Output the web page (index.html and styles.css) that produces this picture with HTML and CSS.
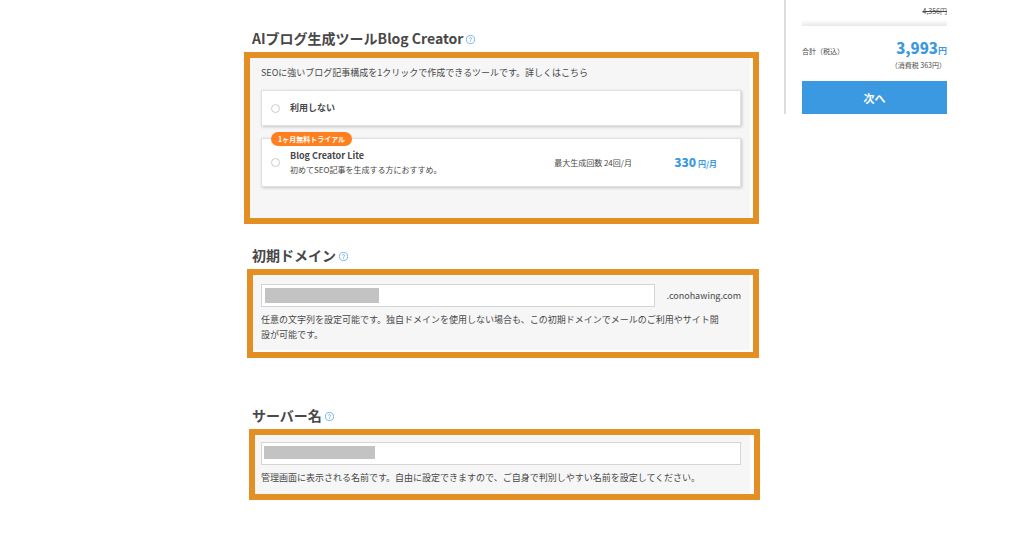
FILE: index.html
```
<!DOCTYPE html>
<html lang="ja">
<head>
    <meta charset="UTF-8">
    <meta name="viewport" content="width=device-width, initial-scale=1.0">
    <title>お申し込み</title>
    <link rel="stylesheet" href="styles.css">
</head>
<body>
    <div class="page">
        <main>
            <section class="creator">
                <h2>AIブログ生成ツールBlog Creator
                    <svg class="help" viewBox="0 0 20 20"><circle cx="10" cy="10" r="9"/><path d="M7.5 8a2.5 2.5 0 1 1 3.8 2.1c-.9.5-1.3.9-1.3 2M10 13.8v1.6"/></svg>
                </h2>
                <div class="frame">
                    <div class="panel">
                        <p class="lead">SEOに強いブログ記事構成を1クリックで作成できるツールです。詳しくはこちら</p>
                        <label class="plan">
                            <input type="radio" name="plan">
                            <span class="plan-name">利用しない</span>
                        </label>
                        <label class="plan lite">
                            <span class="badge">1ヶ月無料トライアル</span>
                            <input type="radio" name="plan">
                            <span class="plan-text">
                                <span class="plan-name">Blog Creator Lite</span>
                                <span class="plan-note">初めてSEO記事を生成する方におすすめ。</span>
                            </span>
                            <span class="plan-limit">最大生成回数 24回/月</span>
                            <span class="plan-price"><b>330</b> 円/月</span>
                        </label>
                    </div>
                </div>
            </section>

            <section class="domain">
                <h2><label for="domain">初期ドメイン</label>
                    <svg class="help" viewBox="0 0 20 20"><circle cx="10" cy="10" r="9"/><path d="M7.5 8a2.5 2.5 0 1 1 3.8 2.1c-.9.5-1.3.9-1.3 2M10 13.8v1.6"/></svg>
                </h2>
                <div class="frame">
                    <div class="panel">
                        <div class="field">
                            <input type="text" id="domain">
                            <span class="mask"></span>
                            <span class="suffix">.conohawing.com</span>
                        </div>
                        <p>任意の文字列を設定可能です。独自ドメインを使用しない場合も、この初期ドメインでメールのご利用やサイト開<br>設が可能です。</p>
                    </div>
                </div>
            </section>

            <section class="server">
                <h2><label for="server">サーバー名</label>
                    <svg class="help" viewBox="0 0 20 20"><circle cx="10" cy="10" r="9"/><path d="M7.5 8a2.5 2.5 0 1 1 3.8 2.1c-.9.5-1.3.9-1.3 2M10 13.8v1.6"/></svg>
                </h2>
                <div class="frame">
                    <div class="panel">
                        <div class="field">
                            <input type="text" id="server">
                            <span class="mask"></span>
                        </div>
                        <p>管理画面に表示される名前です。自由に設定できますので、ご自身で判別しやすい名前を設定してください。</p>
                    </div>
                </div>
            </section>
        </main>

        <aside>
            <del>4,356円</del>
            <div class="divider"></div>
            <div class="total">
                <span>合計（税込）</span>
                <span class="amount"><b>3,993</b>円</span>
            </div>
            <p class="tax">（消費税 363円）</p>
            <button type="button">次へ</button>
        </aside>
    </div>
</body>
</html>
```
FILE: styles.css
```
* {
    box-sizing: border-box;
}

body {
    margin: 0;
    background: #fff;
    color: #484848;
    font-family: "Noto Sans CJK JP", sans-serif;
    font-size: 9px;
    line-height: 15px;
}

p, h2 {
    margin: 0;
}

.page {
    display: flex;
    align-items: flex-start;
    gap: 24px;
    margin: 0 77px 0 244px;
}

main {
    flex: 1;
    min-width: 0;
    padding-top: 26px;
}

section {
    margin-right: 1px;
}

h2 {
    display: flex;
    align-items: center;
    gap: 3px;
    height: 26px;
    padding-left: 8px;
    padding-bottom: 2px;
    font-size: 14px;
    font-weight: bold;
}

.help {
    width: 9px;
    height: 9px;
    margin-top: 2px;
    fill: none;
    stroke: #6aaeea;
    stroke-width: 2;
}

.frame {
    border: 6px solid #e48f24;
    padding-right: 3px;
}

.panel {
    background: #f6f6f6;
    padding: 9px 9px 0 11px;
}

/* Blog Creator */
.creator .panel {
    height: 160px;
    padding-top: 7px;
}

.lead {
    margin-bottom: 10px;
}

.plan {
    position: relative;
    display: flex;
    align-items: center;
    height: 36px;
    padding: 0 24px 0 9px;
    background: #fff;
    border: 1px solid #e0e0e0;
    box-shadow: 1px 1px 3px rgba(0, 0, 0, 0.2);
}

.lite {
    height: 49px;
    margin-top: 12px;
}

.plan input {
    appearance: none;
    width: 9px;
    height: 9px;
    margin: 0 10px 0 0;
    border: 1px solid #ccc;
    border-radius: 50%;
    background: #fff;
}

.plan input:checked {
    background: #3a99e0;
}

.plan-text {
    flex: 1;
}

.plan-name {
    display: block;
    font-weight: bold;
    line-height: 14px;
}

.plan-note {
    display: block;
    font-size: 8px;
    line-height: 13px;
}

.plan-limit {
    width: 120px;
    font-size: 8px;
}

.plan-price {
    color: #3a99e0;
    font-size: 8px;
    font-weight: bold;
}

.plan-price b {
    font-size: 12px;
}

.lite {
    padding-right: 23px;
}

.badge {
    position: absolute;
    top: -7px;
    left: 9px;
    padding: 0 7px;
    border-radius: 7px;
    background: #ff7f1e;
    color: #fff;
    font-size: 7px;
    font-weight: bold;
    line-height: 14px;
}

/* text fields */
.domain {
    margin-top: 19px;
    margin-left: 3px;
}

.server {
    margin-top: 45px;
    margin-left: 5px;
    margin-right: 0;
}

.domain h2 {
    padding-left: 5px;
}

.server h2 {
    padding-left: 3px;
}

.domain .panel {
    height: 75px;
    padding-left: 8px;
    margin-bottom: 2px;
}

.server .panel {
    height: 59px;
    padding: 7px 9px 0 6px;
}

.server .frame {
    padding-right: 4px;
}

.field {
    position: relative;
    display: flex;
    align-items: center;
    gap: 12px;
    margin-bottom: 5px;
}

.field input {
    flex: 1;
    min-width: 0;
    height: 23px;
    padding: 0 4px;
    border: 1px solid #d5d5d5;
    background: #fff;
    font: inherit;
}

.mask {
    position: absolute;
    top: 4px;
    left: 4px;
    width: 114px;
    height: 15px;
    background: #c3c3c3;
}

.server .mask {
    left: 3px;
    width: 111px;
    height: 13px;
}

/* price summary */
aside {
    width: 163px;
    padding: 4px 0 0 16px;
    border-left: 2px solid #ddd;
    font-size: 7px;
}

aside del {
    display: block;
    text-align: right;
}

.divider {
    height: 6px;
    margin-top: 1px;
    background: linear-gradient(#fff, #e8e8e8);
}

.total {
    display: flex;
    justify-content: space-between;
    align-items: baseline;
    margin-top: 12px;
    line-height: 20px;
}

.amount {
    color: #3a99e0;
    font-size: 9px;
    font-weight: bold;
}

.amount b {
    font-size: 15px;
}

.tax {
    padding-right: 1px;
    line-height: 9px;
    text-align: right;
}

aside button {
    display: block;
    width: 100%;
    height: 33px;
    margin-top: 11px;
    padding: 0;
    border: 0;
    background: #3a99e0;
    color: #fff;
    font: bold 11px "Noto Sans CJK JP", sans-serif;
    cursor: pointer;
}
```
